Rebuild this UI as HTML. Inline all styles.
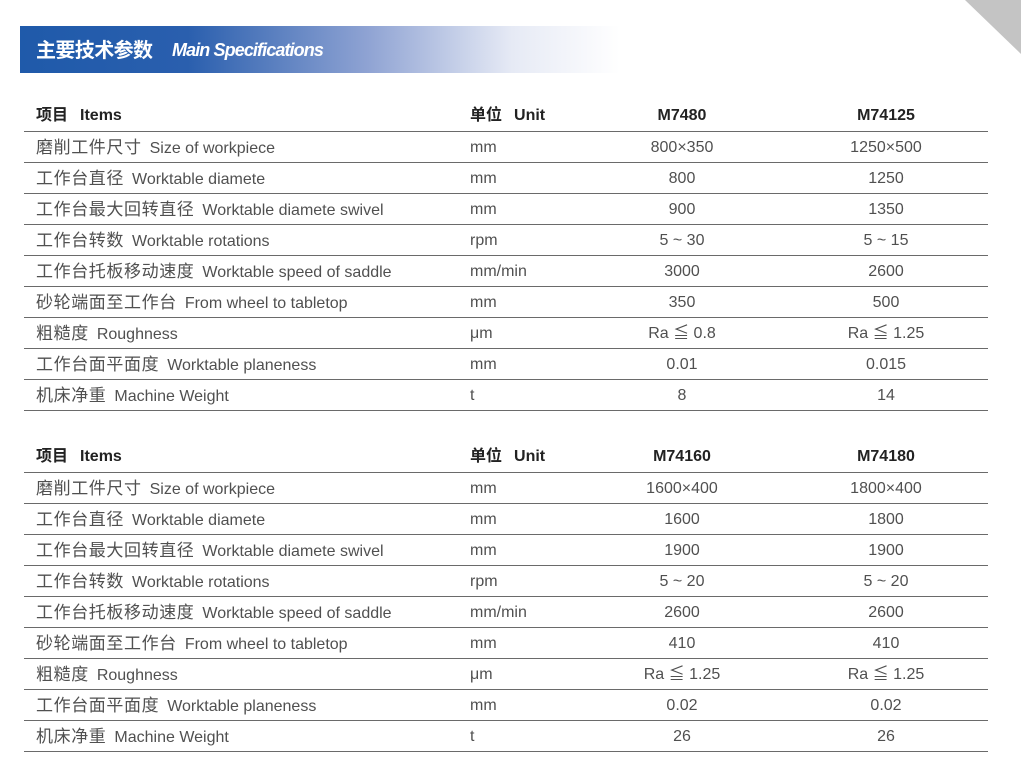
<!DOCTYPE html><html><head><meta charset="utf-8"><style>
body{margin:0;width:1021px;height:784px;background:#fff;position:relative;overflow:hidden;font-family:"Liberation Sans","Noto Sans CJK SC",sans-serif;}
.ban{position:absolute;left:20px;top:26px;width:600px;height:47px;background:linear-gradient(90deg,#1f5aaa 0%,#2a5fae 28%,#8fa3d3 58%,#e6eaf5 82%,#fff 100%);}
.ban .cn{position:absolute;left:16px;top:10px;color:#fff;font-size:20px;font-weight:bold;font-family:"Noto Sans CJK SC",sans-serif;line-height:26px;letter-spacing:-0.6px}
.ban .en{position:absolute;left:152px;top:12px;color:#fff;font-size:18px;font-weight:bold;font-style:italic;letter-spacing:-0.9px;line-height:24px}
.tri{position:absolute;right:0;top:0;width:0;height:0;border-top:54px solid #c4c4c4;border-left:56px solid transparent;}
.row{position:absolute;left:24px;width:964px;height:31px;border-bottom:1.5px solid #6a6a6a;font-size:16px;color:#505050;}
.row span{position:absolute;top:7px;line-height:20px;white-space:nowrap}
.row .a b{font-weight:normal;font-size:17px;letter-spacing:0.6px}
.a{left:12px}.b{left:446px}.c{left:558px;width:200px;text-align:center}.d{left:762px;width:200px;text-align:center}
.h{color:#222;font-weight:bold;font-size:16px}
.h span{top:6px}
.row i{font-style:normal;margin-left:8px}
.h i{margin-left:12px}
</style></head><body>
<div class="ban"><div class="cn">主要技术参数</div><div class="en">Main Specifications</div></div>
<div class="tri"></div>
<div class="row h" style="top:100px"><span class="a">项目<i>Items</i></span><span class="b">单位<i>Unit</i></span><span class="c">M7480</span><span class="d">M74125</span></div>
<div class="row" style="top:131px"><span class="a"><b>磨削工件尺寸</b><i>Size of workpiece</i></span><span class="b">mm</span><span class="c">800×350</span><span class="d">1250×500</span></div>
<div class="row" style="top:162px"><span class="a"><b>工作台直径</b><i>Worktable diamete</i></span><span class="b">mm</span><span class="c">800</span><span class="d">1250</span></div>
<div class="row" style="top:193px"><span class="a"><b>工作台最大回转直径</b><i>Worktable diamete swivel</i></span><span class="b">mm</span><span class="c">900</span><span class="d">1350</span></div>
<div class="row" style="top:224px"><span class="a"><b>工作台转数</b><i>Worktable rotations</i></span><span class="b">rpm</span><span class="c">5 ~ 30</span><span class="d">5 ~ 15</span></div>
<div class="row" style="top:255px"><span class="a"><b>工作台托板移动速度</b><i>Worktable speed of saddle</i></span><span class="b">mm/min</span><span class="c">3000</span><span class="d">2600</span></div>
<div class="row" style="top:286px"><span class="a"><b>砂轮端面至工作台</b><i>From wheel to tabletop</i></span><span class="b">mm</span><span class="c">350</span><span class="d">500</span></div>
<div class="row" style="top:317px"><span class="a"><b>粗糙度</b><i>Roughness</i></span><span class="b">μm</span><span class="c">Ra ≦ 0.8</span><span class="d">Ra ≦ 1.25</span></div>
<div class="row" style="top:348px"><span class="a"><b>工作台面平面度</b><i>Worktable planeness</i></span><span class="b">mm</span><span class="c">0.01</span><span class="d">0.015</span></div>
<div class="row" style="top:379px"><span class="a"><b>机床净重</b><i>Machine Weight</i></span><span class="b">t</span><span class="c">8</span><span class="d">14</span></div>

<div class="row h" style="top:441px"><span class="a">项目<i>Items</i></span><span class="b">单位<i>Unit</i></span><span class="c">M74160</span><span class="d">M74180</span></div>
<div class="row" style="top:472px"><span class="a"><b>磨削工件尺寸</b><i>Size of workpiece</i></span><span class="b">mm</span><span class="c">1600×400</span><span class="d">1800×400</span></div>
<div class="row" style="top:503px"><span class="a"><b>工作台直径</b><i>Worktable diamete</i></span><span class="b">mm</span><span class="c">1600</span><span class="d">1800</span></div>
<div class="row" style="top:534px"><span class="a"><b>工作台最大回转直径</b><i>Worktable diamete swivel</i></span><span class="b">mm</span><span class="c">1900</span><span class="d">1900</span></div>
<div class="row" style="top:565px"><span class="a"><b>工作台转数</b><i>Worktable rotations</i></span><span class="b">rpm</span><span class="c">5 ~ 20</span><span class="d">5 ~ 20</span></div>
<div class="row" style="top:596px"><span class="a"><b>工作台托板移动速度</b><i>Worktable speed of saddle</i></span><span class="b">mm/min</span><span class="c">2600</span><span class="d">2600</span></div>
<div class="row" style="top:627px"><span class="a"><b>砂轮端面至工作台</b><i>From wheel to tabletop</i></span><span class="b">mm</span><span class="c">410</span><span class="d">410</span></div>
<div class="row" style="top:658px"><span class="a"><b>粗糙度</b><i>Roughness</i></span><span class="b">μm</span><span class="c">Ra ≦ 1.25</span><span class="d">Ra ≦ 1.25</span></div>
<div class="row" style="top:689px"><span class="a"><b>工作台面平面度</b><i>Worktable planeness</i></span><span class="b">mm</span><span class="c">0.02</span><span class="d">0.02</span></div>
<div class="row" style="top:720px"><span class="a"><b>机床净重</b><i>Machine Weight</i></span><span class="b">t</span><span class="c">26</span><span class="d">26</span></div>
</body></html>
